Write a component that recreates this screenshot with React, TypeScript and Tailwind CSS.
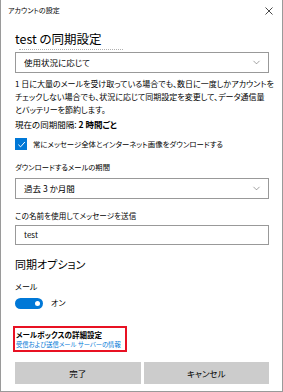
import { ChevronDown } from 'lucide-react';

const font = "font-['Yu_Gothic_UI','Noto_Sans_CJK_JP',sans-serif] [font-feature-settings:'palt']";

function Select({ value }: { value: string }) {
    return (
        <div className="flex h-[21px] items-center justify-between border border-[#999999] pl-[8px] pr-[6px]">
            <span className="text-[8.5px] text-black">{value}</span>
            <ChevronDown className="h-[11px] w-[11px] text-[#555555]" strokeWidth={1.2} />
        </div>
    );
}

function Label({ children, className = '' }: { children: React.ReactNode; className?: string }) {
    return (
        <div className={`h-[13px] whitespace-nowrap leading-[13px] text-black ${className}`}>
            {children}
        </div>
    );
}

export default function App() {
    return (
        <div
            className={`relative h-[392px] w-[283px] overflow-hidden border-x border-b border-[#9a9a9a] bg-white ${font}`}
        >
            <div className="flex h-[21px] items-center justify-between pl-[7px] pr-[9px]">
                <span className="text-[7px] text-black">アカウントの設定</span>
                <svg width="8" height="8" viewBox="0 0 8 8" className="text-[#333333]">
                    <path d="M0.5 0.5 L7.5 7.5 M7.5 0.5 L0.5 7.5" stroke="currentColor" strokeWidth="0.9" />
                </svg>
            </div>

            <div className="pl-[14px] pr-[13px]">
                <div className="mt-[10px] h-[16px] text-[12.5px] leading-[16px] text-black">
                    test の同期設定
                </div>
                {/* bottom edge of the line that has scrolled under the title */}
                <div className="h-[4px] overflow-hidden">
                    <div className="ml-[4px] mt-[2px] h-[1px] w-[104px] border-t border-dotted border-[#b0b0b0]" />
                </div>
                <div className="mt-[1px]">
                    <Select value="使用状況に応じて" />
                </div>

                <div className="mt-[4px] whitespace-nowrap text-[8px] leading-[13px] text-black">
                    1 日に大量のメールを受け取っている場合でも、数日に一度しかアカウントを
                    <br />
                    チェックしない場合でも、状況に応じて同期設定を変更して、データ通信量
                    <br />
                    とバッテリーを節約します。
                </div>

                <Label className="mt-[2px] text-[8.5px]">
                    現在の同期間隔: <span className="font-bold">2 時間ごと</span>
                </Label>

                <div className="mt-[6px] flex h-[14px] items-center gap-[6px]">
                    <div className="flex h-[12px] w-[12px] items-center justify-center bg-[#0078d7]">
                        <svg width="9" height="9" viewBox="0 0 10 10">
                            <path d="M1.5 5.2 L4 7.6 L8.8 2.2" fill="none" stroke="white" strokeWidth="1.1" />
                        </svg>
                    </div>
                    <span className="whitespace-nowrap text-[7.4px] text-black">
                        常にメッセージ全体とインターネット画像をダウンロードする
                    </span>
                </div>

                <Label className="mt-[10px] text-[7.3px]">ダウンロードするメールの期間</Label>
                <div className="mt-[4px]">
                    <Select value="過去 3 か月間" />
                </div>

                <Label className="mt-[10px] text-[7.6px]">この名前を使用してメッセージを送信</Label>
                <div className="mt-[3px] flex h-[20px] items-center border border-[#999999] pl-[8px] text-[8px] text-black">
                    test
                </div>

                <div className="mt-[11px] h-[16px] text-[11px] leading-[16px] text-black">
                    同期オプション
                </div>

                <Label className="mt-[8px] text-[8px]">メール</Label>
                <div className="mt-[4px] flex h-[12px] items-center gap-[8px]">
                    <div className="flex h-[11px] w-[28px] items-center justify-end rounded-full bg-[#0078d7] pr-[3px]">
                        <div className="h-[5px] w-[5px] rounded-full bg-white" />
                    </div>
                    <span className="text-[8px] text-black">オン</span>
                </div>

                <div className="-ml-[2px] mt-[17px] h-[26px] w-[114px] border-2 border-[#e81123] pl-[1px]">
                    <div className="mt-[1px] h-[11px] whitespace-nowrap text-[7.5px] font-bold leading-[11px] text-black">
                        メールボックスの詳細設定
                    </div>
                    <div className="h-[10px] whitespace-nowrap text-[6.3px] leading-[10px] text-[#0078d7]">
                        受信および送信メール サーバーの情報
                    </div>
                </div>

                <div className="mt-[10px] flex h-[22px] gap-[3px]">
                    <button className="flex-1 bg-[#cccccc] text-[8.5px] text-black">完了</button>
                    <button className="flex-1 bg-[#cccccc] text-[8.5px] text-black">キャンセル</button>
                </div>
            </div>
        </div>
    );
}
